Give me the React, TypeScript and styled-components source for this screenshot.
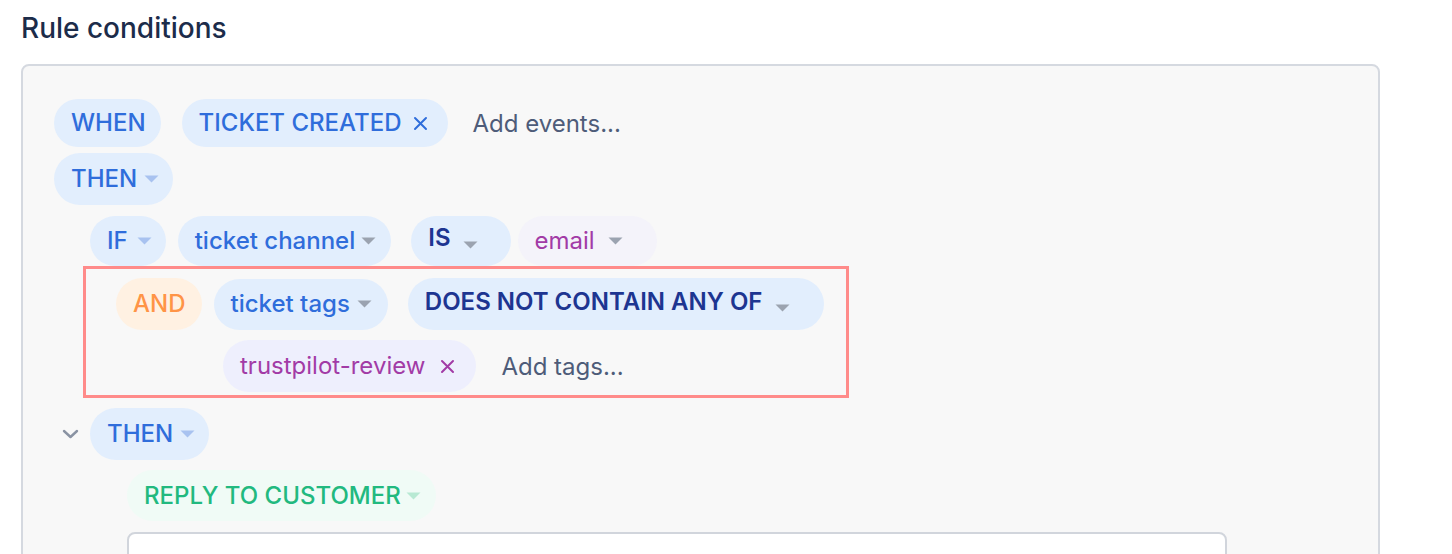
import React from "react";
import styled, { createGlobalStyle, css } from "styled-components";

const Global = createGlobalStyle`
  html, body { margin: 0; padding: 0; overflow: hidden; background: #ffffff; }
  body { font-family: Inter, "Noto Sans", "Liberation Sans", sans-serif; -webkit-font-smoothing: antialiased; }
  * { box-sizing: border-box; }
`;

const Page = styled.div`
  padding: 12px 0 0 21px;
  height: 554px;
`;

const Title = styled.h2`
  margin: 0 0 20px 0;
  font-size: 28px;
  line-height: 32px;
  font-weight: 500;
  color: #1c2c4a;
`;

const Panel = styled.div`
  width: 1359px;
  height: 600px;
  background: #f8f8f8;
  border: 2px solid #d5d9e0;
  border-radius: 8px;
  padding: 33px 0 0 31px;
  display: flex;
  flex-direction: column;
`;

const Row = styled.div<{ $indent?: number; $mt?: number }>`
  display: flex;
  align-items: center;
  margin-left: ${(p) => p.$indent ?? 0}px;
  margin-top: ${(p) => p.$mt ?? 0}px;
`;

type Tone = "blue" | "navy" | "orange" | "purple" | "lavender" | "green";

const tones: Record<Tone, { bg: string; fg: string; weight: number }> = {
  blue: { bg: "#e2eefd", fg: "#2f6ddb", weight: 500 },
  navy: { bg: "#e2eefd", fg: "#1d3591", weight: 600 },
  orange: { bg: "#fff1e2", fg: "#ff9446", weight: 500 },
  purple: { bg: "#eeeffd", fg: "#a23ba6", weight: 400 },
  lavender: { bg: "#f4f3fa", fg: "#a23ba6", weight: 400 },
  green: { bg: "#f0fbf6", fg: "#22b97f", weight: 500 },
};

const Pill = styled.div<{ $tone: Tone; $h?: number; $pr?: number; $ml?: number }>`
  display: inline-flex;
  align-items: center;
  height: ${(p) => p.$h ?? 51}px;
  padding: 0 ${(p) => p.$pr ?? 16}px 0 17px;
  margin-left: ${(p) => p.$ml ?? 0}px;
  border-radius: 26px;
  font-size: 24px;
  line-height: 1;
  white-space: nowrap;
  ${(p) => css`
    background: ${tones[p.$tone].bg};
    color: ${tones[p.$tone].fg};
    font-weight: ${tones[p.$tone].weight};
  `}
`;

const Raised = styled.span<{ $dy: number }>`
  position: relative;
  top: ${(p) => p.$dy}px;
`;

const Caret = styled.svg<{ $gap?: number; $dy?: number }>`
  width: 15px;
  height: 8px;
  margin-left: ${(p) => p.$gap ?? 6}px;
  position: relative;
  top: ${(p) => p.$dy ?? 0}px;
  flex: none;
`;

const CloseIcon = styled.svg<{ $gap: number }>`
  width: 15px;
  height: 15px;
  margin-left: ${(p) => p.$gap}px;
  flex: none;
`;

const Placeholder = styled.span<{ $ml: number }>`
  margin-left: ${(p) => p.$ml}px;
  font-size: 24px;
  color: #4e5c79;
  font-weight: 400;
`;

const Highlight = styled.div`
  width: 766px;
  margin-left: -1px;
  border: 3px solid #ff8b8a;
  padding: 9px 0 3px 30px;
  display: flex;
  flex-direction: column;
`;

const Chevron = styled.svg`
  width: 17px;
  height: 10px;
  margin-left: -28px;
  margin-right: 11px;
  flex: none;
`;

const Editor = styled.div`
  width: 1100px;
  height: 120px;
  margin-left: 73px;
  margin-top: 11px;
  background: #ffffff;
  border: 2px solid #d1d5dc;
  border-radius: 8px;
`;

const Down = ({ color, gap, dy }: { color: string; gap?: number; dy?: number }) => (
  <Caret viewBox="0 0 15 8" $gap={gap} $dy={dy}>
    <path d="M0.5 0.5 L14.5 0.5 L7.5 7.5 Z" fill={color} />
  </Caret>
);

const X = ({ color, gap = 12 }: { color: string; gap?: number }) => (
  <CloseIcon viewBox="0 0 15 15" $gap={gap}>
    <path d="M2 2 L13 13 M13 2 L2 13" stroke={color} strokeWidth="2" strokeLinecap="round" />
  </CloseIcon>
);

const LIGHT_BLUE = "#a8c2f0";
const GRAY = "#9ba3b0";
const LIGHT_GREEN = "#b8e9d3";

export default function App() {
  return (
    <>
      <Global />
      <Page>
        <Title>Rule conditions</Title>
        <Panel>
          <Row>
            <Pill $tone="blue" $h={48} $pr={15}>WHEN</Pill>
            <Pill $tone="blue" $h={48} $ml={21} $pr={20}>
              TICKET CREATED
              <X color="#2f6ddb" />
            </Pill>
            <Placeholder $ml={24}>Add events...</Placeholder>
          </Row>
          <Row $mt={6}>
            <Pill $tone="blue" $h={52} $pr={14}>
              THEN
              <Down color={LIGHT_BLUE} gap={7} />
            </Pill>
          </Row>
          <Row $indent={36} $mt={11}>
            <Pill $tone="blue" $h={50} $pr={14}>
              IF
              <Down color={LIGHT_BLUE} gap={9} />
            </Pill>
            <Pill $tone="blue" $h={50} $ml={12} $pr={15}>
              ticket channel
              <Down color={GRAY} gap={6} />
            </Pill>
            <Pill $tone="navy" $h={50} $ml={20} $pr={33}>
              <Raised $dy={-3}>IS</Raised>
              <Down color={GRAY} gap={12} dy={4} />
            </Pill>
            <Pill $tone="lavender" $h={50} $ml={7} $pr={34}>
              email
              <Down color={GRAY} gap={13} />
            </Pill>
          </Row>
          <Row $indent={30}>
            <Highlight>
              <Row>
                <Pill $tone="orange" $h={52}>AND</Pill>
                <Pill $tone="blue" $h={51} $ml={12}>
                  ticket tags
                  <Down color={GRAY} gap={7} />
                </Pill>
                <Pill $tone="navy" $h={52} $ml={20} $pr={34}>
                  <Raised $dy={-2}>DOES NOT CONTAIN ANY OF</Raised>
                  <Down color={GRAY} gap={13} dy={4} />
                </Pill>
              </Row>
              <Row $indent={107} $mt={10}>
                <Pill $tone="purple" $h={52} $pr={21}>
                  trustpilot-review
                  <X color="#a23ba6" gap={15} />
                </Pill>
                <Placeholder $ml={25}>Add tags...</Placeholder>
              </Row>
            </Highlight>
          </Row>
          <Row $indent={36} $mt={10}>
            <Chevron viewBox="0 0 17 10">
              <path d="M2 2 L8.5 8 L15 2" fill="none" stroke="#8a93a3" strokeWidth="2.4" strokeLinecap="round" strokeLinejoin="round" />
            </Chevron>
            <Pill $tone="blue" $h={52} $pr={14}>
              THEN
              <Down color={LIGHT_BLUE} gap={7} />
            </Pill>
          </Row>
          <Row $indent={73} $mt={10}>
            <Pill $tone="green" $h={51} $pr={15}>
              REPLY TO CUSTOMER
              <Down color={LIGHT_GREEN} gap={5} />
            </Pill>
          </Row>
          <Editor />
        </Panel>
      </Page>
    </>
  );
}
